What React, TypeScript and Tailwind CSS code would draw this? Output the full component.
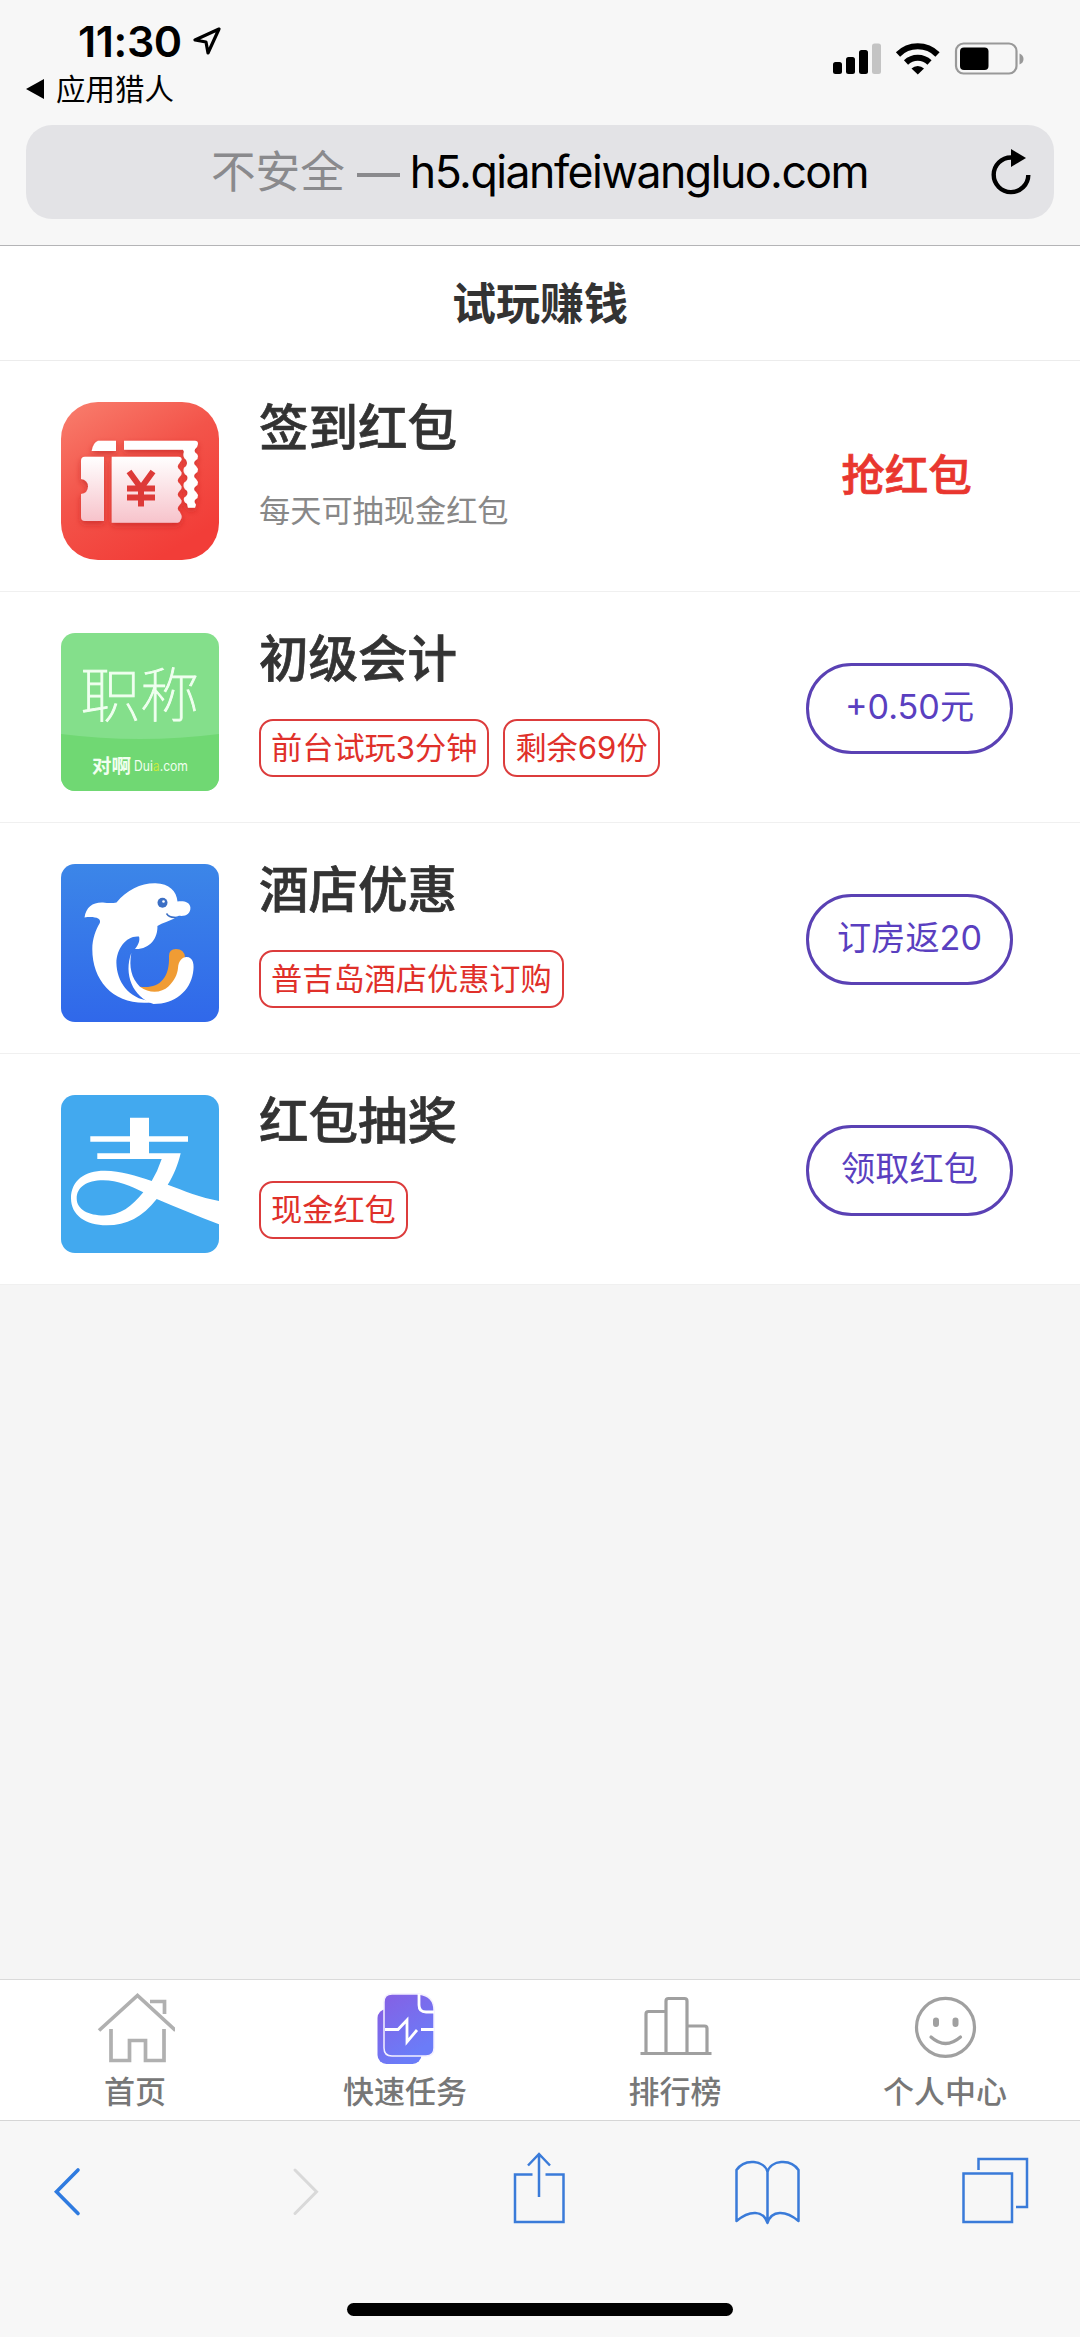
import type { ReactNode } from "react";

const tasks: Task[] = [
  {
    title: "签到红包",
    logo: <CouponLogo />,
    subtitle: "每天可抽现金红包",
    action: "抢红包",
    plain: true,
  },
  {
    title: "初级会计",
    logo: <DuiaLogo />,
    tags: ["前台试玩3分钟", "剩余69份"],
    action: "+0.50元",
  },
  {
    title: "酒店优惠",
    logo: <DolphinLogo />,
    tags: ["普吉岛酒店优惠订购"],
    action: "订房返20",
  },
  {
    title: "红包抽奖",
    logo: <AlipayLogo />,
    tags: ["现金红包"],
    action: "领取红包",
  },
];

const tabs = [
  { label: "首页", icon: <HomeIcon /> },
  { label: "快速任务", icon: <TaskIcon /> },
  { label: "排行榜", icon: <RankIcon /> },
  { label: "个人中心", icon: <SmileIcon /> },
];

interface Task {
  title: string;
  logo: ReactNode;
  subtitle?: string;
  tags?: string[];
  action: string;
  plain?: boolean;
}

export default function App() {
  return (
    <div className="flex h-[2337px] w-[1080px] flex-col overflow-hidden bg-[#f5f5f5] font-['Inter','Noto_Sans_CJK_SC',sans-serif]">
      <BrowserHeader />
      <h1 className="flex h-[115px] shrink-0 items-center justify-center border-[#ececec] border-b bg-white pt-px font-bold text-[#333] text-[44px] leading-none">
        试玩赚钱
      </h1>
      <main className="flex-1">
        {tasks.map((task) => (
          <TaskRow key={task.title} task={task} />
        ))}
      </main>
      <nav className="grid h-[141px] shrink-0 grid-cols-4 border-[#dadada] border-t bg-white">
        {tabs.map((tab) => (
          <div className="flex flex-col items-center pt-3" key={tab.label}>
            {tab.icon}
            <span className="mt-[12px] font-medium text-[#777] text-[31px] leading-[31px]">
              {tab.label}
            </span>
          </div>
        ))}
      </nav>
      <BrowserToolbar />
    </div>
  );
}

function BrowserHeader() {
  return (
    <header className="flex h-[246px] shrink-0 flex-col border-[#b4b4b6] border-b bg-[#f7f7f7] px-[26px]">
      <div className="flex h-[125px] justify-between">
        <div className="flex flex-col">
          <div className="mt-[21px] ml-[52px] flex h-10 items-center gap-[10px]">
            <span className="font-semibold text-[43px] text-black leading-none tracking-[-0.4px]">
              11:30
            </span>
            <svg fill="none" height="30" viewBox="0 0 30 30" width="30">
              <path
                d="M27 3 3 14l11 2 2 11z"
                stroke="#000"
                strokeLinejoin="round"
                strokeWidth="3.2"
              />
            </svg>
          </div>
          <div className="mt-[13px] flex items-center gap-3">
            <svg height="20" viewBox="0 0 18 20" width="18">
              <path d="M0 10 18 0v20z" />
            </svg>
            <span className="text-[29.5px] text-black leading-[30px]">
              应用猎人
            </span>
          </div>
        </div>
        <StatusIcons />
      </div>
      <div className="flex h-[94px] w-[1028px] items-center rounded-[26px] bg-[#e3e3e6] pr-[22px] pl-[185px]">
        <span className="text-[#8a8a8d] text-[44.6px] leading-none">
          不安全
        </span>
        <span className="mt-[6px] ml-[12px] h-[4px] w-[43px] bg-[#8a8a8d]" />
        <span className="ml-[10px] text-[44.6px] text-black leading-none tracking-[-1.5px]">
          h5.qianfeiwangluo.com
        </span>
        <svg
          className="ml-auto"
          fill="none"
          height="48"
          viewBox="0 0 42 48"
          width="42"
        >
          <path
            d="M21 9.500A17.300 17.300 0 1 0 38.300 27"
            stroke="#000"
            strokeWidth="4.400"
          />
          <path d="M21 1v18l15-9z" fill="#000" />
        </svg>
      </div>
    </header>
  );
}

function StatusIcons() {
  return (
    <svg
      className="mt-10 mr-[29px]"
      fill="none"
      height="38"
      viewBox="830 40 195 38"
      width="195"
    >
      <rect fill="#000" height="12" rx="2.500" width="9" x="833" y="62" />
      <rect fill="#000" height="17" rx="2.500" width="9" x="846" y="57" />
      <rect fill="#000" height="24" rx="2.500" width="9" x="859" y="50" />
      <rect fill="#c4c4c4" height="30.500" rx="2.500" width="9" x="872" y="43.500" />
      <path
        d="M898 54.500a28 28 0 0 1 39.500 0M906 62.500a17 17 0 0 1 23.500 0"
        stroke="#000"
        strokeWidth="6"
      />
      <path d="M911.500 68.500a9 9 0 0 1 12.500 0l-6.200 6z" fill="#000" />
      <rect
        height="30"
        rx="7.500"
        stroke="#999"
        strokeWidth="2.200"
        width="60.500"
        x="956"
        y="43.500"
      />
      <rect fill="#000" height="22.500" rx="4" width="28.500" x="960" y="47.500" />
      <path d="M1019.500 53.500q4 1.500 4 5.500t-4 5.500z" fill="#999" />
    </svg>
  );
}

function TaskRow({ task }: { task: Task }) {
  return (
    <section className="flex h-[231px] border-[#f0f0f0] border-b bg-white pt-[41px] pr-[67px] pl-[61px]">
      {task.logo}
      <div className="ml-10 flex flex-1 flex-col">
        <h2 className="mt-px font-medium text-[#333] text-[49.5px] leading-[50px] [-webkit-text-stroke:0.7px_#333]">
          {task.title}
        </h2>
        {task.subtitle && (
          <p className="mt-[42px] text-[#888] text-[31.2px] leading-[32px]">
            {task.subtitle}
          </p>
        )}
        {task.tags && (
          <div className="mt-[35px] flex gap-[14px]">
            {task.tags.map((tag) => (
              <span
                className="flex h-[58px] items-center rounded-[14px] border-2 border-[#dc3c3c] px-[10px] pt-px text-[#e0302a] text-[31.200px] leading-none"
                key={tag}
              >
                {tag}
              </span>
            ))}
          </div>
        )}
      </div>
      {task.plain ? (
        <span className="mt-[51px] h-11 w-[207px] pr-1.5 text-center font-medium text-[#e9362f] text-[43.500px] leading-[44px] [-webkit-text-stroke:0.7px_#e9362f]">
          {task.action}
        </span>
      ) : (
        <button
          className="mt-[30px] flex h-[91px] w-[207px] items-center justify-center rounded-[46px] border-[#5a41b4] border-[3px] pb-[2px] text-[#5a3fc0] text-[34.200px] leading-none"
          type="button"
        >
          {task.action}
        </button>
      )}
    </section>
  );
}

function CouponLogo() {
  return (
    <svg height="158" viewBox="0 0 158 158" width="158">
      <defs>
        <linearGradient id="coupon-bg" x1="0" x2="0.6" y1="0" y2="1">
          <stop offset="0" stopColor="#f97f6e" />
          <stop offset="0.5" stopColor="#f3544a" />
          <stop offset="1" stopColor="#f23d38" />
        </linearGradient>
        <linearGradient id="coupon-paper" x1="0" x2="0" y1="0" y2="1">
          <stop offset="0" stopColor="#fff" />
          <stop offset="1" stopColor="#f7c3cb" />
        </linearGradient>
        <filter height="1.4" id="coupon-shadow" width="1.4" x="-0.2" y="-0.2">
          <feDropShadow
            dx="0"
            dy="3"
            floodColor="#b81f1f"
            floodOpacity="0.55"
            stdDeviation="3"
          />
        </filter>
      </defs>
      <rect fill="url(#coupon-bg)" height="158" rx="37" width="158" />
      <g fill="#fff" filter="url(#coupon-shadow)">
        <path d="M37 38.700h18V49H30.700q1-8 6.300-10.300z" />
        <path d="M63 38.700h71q3 0 3 3.300l-1 3q-5 4 0 7l1 2q0 3-2 4-4 3 0 6l2 3q0 3-2 4-4 3 0 6l2 3q0 3-2 4-4 3 0 6l2 3q0 3-2 4-3 2 0 5.700l-1 3h-7l-1-4q-4-2-3-6 5-3 3-7-5-3-3-8 5-3 3-7-5-3-3-8 5-3 2-8-4-3-2-8l-1-2H63z" />
      </g>
      <g fill="url(#coupon-paper)" filter="url(#coupon-shadow)">
        <path d="M24 54.700h19V119H24q-4 0-4-4V92q7-1 7-7.500T20 77V58.700q0-4 4-4z" />
        <path d="M50.700 54.700h67q3 0 3 3l-2 3q-4 4 0 7l2 3q0 3-2 4-4 4 0 7l2 3q0 3-2 4-4 4 0 7l2 3q0 3-2 4-4 4 0 7l1 2q2 3 0 6-1 3-3 3h-66z" />
      </g>
      <path
        d="M68 69.500 80 86 92 69.500M80 84v20.500M66 86.500h28M66 95.500h28"
        fill="none"
        stroke="#dd3a38"
        strokeWidth="6"
      />
    </svg>
  );
}

function DuiaLogo() {
  return (
    <svg height="158" viewBox="0 0 158 158" width="158">
      <defs>
        <clipPath id="duia-clip">
          <rect height="158" rx="14" width="158" />
        </clipPath>
      </defs>
      <g clipPath="url(#duia-clip)">
        <rect fill="#84df8b" height="158" width="158" />
        <path d="M0 101q79 10 158 0v57H0z" fill="#70d873" />
      </g>
      <text
        className="font-['Noto_Sans_CJK_SC',sans-serif] font-thin text-[59.500px]"
        fill="#f0fff0"
        stroke="#f0fff0"
        strokeWidth="0.9"
        x="19.500"
        y="84"
      >
        职称
      </text>
      <text
        className="font-['Noto_Sans_CJK_SC',sans-serif] font-bold text-[19.500px]"
        fill="#f0fff0"
        x="31"
        y="140"
      >
        对啊
      </text>
      <text
        className="font-['Inter',sans-serif] text-[14px]"
        fill="#f0fff0"
        textLength="54"
        lengthAdjust="spacingAndGlyphs"
        x="73"
        y="138"
      >
        Dui<tspan fill="#c6ea3c">a</tspan>.com
      </text>
    </svg>
  );
}

function DolphinLogo() {
  return (
    <svg height="158" viewBox="0 0 158 158" width="158">
      <defs>
        <linearGradient id="dolphin-bg" x1="0" x2="0" y1="0" y2="1">
          <stop offset="0" stopColor="#3c86e8" />
          <stop offset="1" stopColor="#3068ea" />
        </linearGradient>
      </defs>
      <rect fill="url(#dolphin-bg)" height="158" rx="14" width="158" />
      <path
        d="M108 92q0-7 7-7 8 0 9 8l-5 6c0 18-12 31-27 31q-8-1-14-7.500c18 3 31-6 30-30.500z"
        fill="#f09c34"
      />
      <g fill="#fff">
        <path d="M23.500 53.500C25 43 32 38 42 38.500q8 1 13.500 0C66 26 80 19 94.500 19.300c14 .5 21 8 22 18.200 6-1 12.500.5 12.900 6 .3 6-4.500 9.200-11.400 8.300-4 1.500-6 1.200-9 0q3 3 5.500 2.300c-6 3-13 5-18.100 7.900.6 12-7.400 23.500-22.400 23 4-5 5-9 4-12.500C66 71 55.500 84 55.400 99c.3 18 12 36 33.600 37.700l1 1.800C54 142 31.300 118 31.300 85c0-10 3.700-20 7.500-26 2-5-6-7-15.300-5.500z" />
        <path d="M70.300 89c-2.500 14 0 25 8.600 33.700 10 7.500 22 6 28.500-.2 6-6 9-12 9.600-18.500.5-7 4-11 8.500-11 7 0 8 8 6.500 16-3 18-18 31-39.500 31-21-7-30-30-22.200-51z" />
      </g>
      <circle cx="101.500" cy="38.700" fill="#3c6fc4" r="5" />
      <circle cx="102.500" cy="37.500" fill="#fff" r="1.300" />
      <path
        d="M105.500 49.500q3 4.500 9 4"
        fill="none"
        stroke="#3c6fc4"
        strokeWidth="1.500"
      />
    </svg>
  );
}

function AlipayLogo() {
  return (
    <svg height="158" viewBox="0 0 158 158" width="158">
      <rect fill="#42a9ef" height="158" rx="14" width="158" />
      <path
        d="M69 22.700h19v18.500h39v5.500H88v11.600h31.700c-3 12-7 22-13 31.500 16 6 33 13 51.300 16.200v23.300C136 121 115 112 95.700 104c-14 18-30 26.300-50 26.300-21 0-35.700-10-35.700-27 0-18 14-27.800 34-27.600 16 .3 31 5 46.700 10.300q6-10 10-22H36.300v-5.700H69V46.700H29.300v-5.500H69zM82.300 97.300C70 91 57 85.300 42.300 85.300c-17 0-26.600 7-26.600 18.200 0 11 12 17 27.300 17 16 0 28-9 39.300-23.200z"
        fill="#fff"
        fillRule="evenodd"
      />
    </svg>
  );
}

function HomeIcon() {
  return (
    <svg
      fill="none"
      height="72"
      stroke="#b0b0b0"
      strokeWidth="3.700"
      viewBox="0 0 80 72"
      width="80"
    >
      <path d="m4 38.500 38.500-35 38 35" />
      <path d="M55 9.500h14.500V22M16 37v31.500h18.500v-20h16v20H69V37" />
    </svg>
  );
}

function TaskIcon() {
  return (
    <svg fill="none" height="72" viewBox="0 0 80 72" width="80">
      <defs>
        <linearGradient id="task-fill" x1="0" x2="0.5" y1="0" y2="1">
          <stop offset="0" stopColor="#8560e4" />
          <stop offset="1" stopColor="#6b7cf8" />
        </linearGradient>
      </defs>
      <rect fill="url(#task-fill)" height="55" rx="9" width="44" x="12.500" y="17" />
      <path
        d="M27 2h27q15 2 15 16v38q0 8-8 8H27q-8 0-8-8V10q0-8 8-8z"
        fill="url(#task-fill)"
        stroke="#f4f0ff"
        strokeWidth="1.500"
      />
      <path
        d="M54 2v11q0 7 7 7h8M20 37.500h13l9-9.500v22l10-12M56 37.500h13"
        stroke="#fff"
        strokeWidth="2.800"
      />
    </svg>
  );
}

function RankIcon() {
  return (
    <svg
      fill="none"
      height="72"
      stroke="#a0a0a0"
      strokeWidth="3.200"
      viewBox="0 0 80 72"
      width="80"
    >
      <path d="M5.500 61.500h71M11 61.500V22q0-2.500 2.500-2.500H31M31 61.500V9q0-2.500 2.500-2.500h16Q52 6.500 52 9v52.500M52 34h17.500q2.500 0 2.500 2.500v25" />
    </svg>
  );
}

function SmileIcon() {
  return (
    <svg
      fill="none"
      height="72"
      stroke="#a0a0a0"
      strokeLinecap="round"
      strokeWidth="3.200"
      viewBox="0 0 80 72"
      width="80"
    >
      <circle cx="40.500" cy="35.300" r="29" />
      <path d="M31 28.500v3.500M50.500 28.500v3.500" strokeWidth="6" />
      <path d="M26 45q14.500 13 29.500 0" />
    </svg>
  );
}

function BrowserToolbar() {
  return (
    <footer className="flex h-[217px] shrink-0 flex-col items-center border-[#d6d6d6] border-t bg-[#f7f7f7]">
      <div className="mt-[27px] flex h-20 w-full items-center justify-between pr-[49px] pl-[52px] text-[#3a7bd9]">
        <svg fill="none" height="80" viewBox="52 2148 30 80" width="30">
          <path
            d="m78 2170-21.500 21.700L78 2213.500"
            stroke="#2f7be0"
            strokeLinecap="round"
            strokeWidth="3.600"
          />
        </svg>
        <svg
          className="ml-[48px]"
          fill="none"
          height="80"
          viewBox="293 2148 30 80"
          width="30"
        >
          <path
            d="m296 2170 21.500 21.700L296 2213.500"
            stroke="#d9d9d9"
            strokeLinecap="round"
            strokeWidth="3"
          />
        </svg>
        <svg
          className="ml-[26px]"
          fill="none"
          height="80"
          viewBox="510 2148 56 80"
          width="56"
        >
          <path
            d="M531.500 2174.500H514v47.500h48.500v-47.500h-18M538 2197v-42.500M527 2165.500l11-11.500 11 11.500"
            stroke="currentColor"
            strokeWidth="2.500"
          />
        </svg>
        <svg
          className="mr-[-3px] ml-[3px]"
          fill="none"
          height="80"
          viewBox="732 2148 70 80"
          width="70"
        >
          <path
            d="M767.500 2223v-51c-3-12-23-14-31-2v51c13-11 27-11 31 2 4-13 18-13 31-2v-51c-8-12-28-10-31 2"
            stroke="currentColor"
            strokeLinejoin="round"
            strokeWidth="2.500"
          />
        </svg>
        <svg fill="none" height="80" viewBox="961 2148 70 80" width="70">
          <path
            d="M963.500 2173.500h48.500v48.500h-48.500zM978.500 2170v-11h48.500v48h-11"
            stroke="currentColor"
            strokeWidth="2.500"
          />
        </svg>
      </div>
      <div className="mt-[75px] h-[13px] w-[386px] rounded-full bg-black" />
    </footer>
  );
}
